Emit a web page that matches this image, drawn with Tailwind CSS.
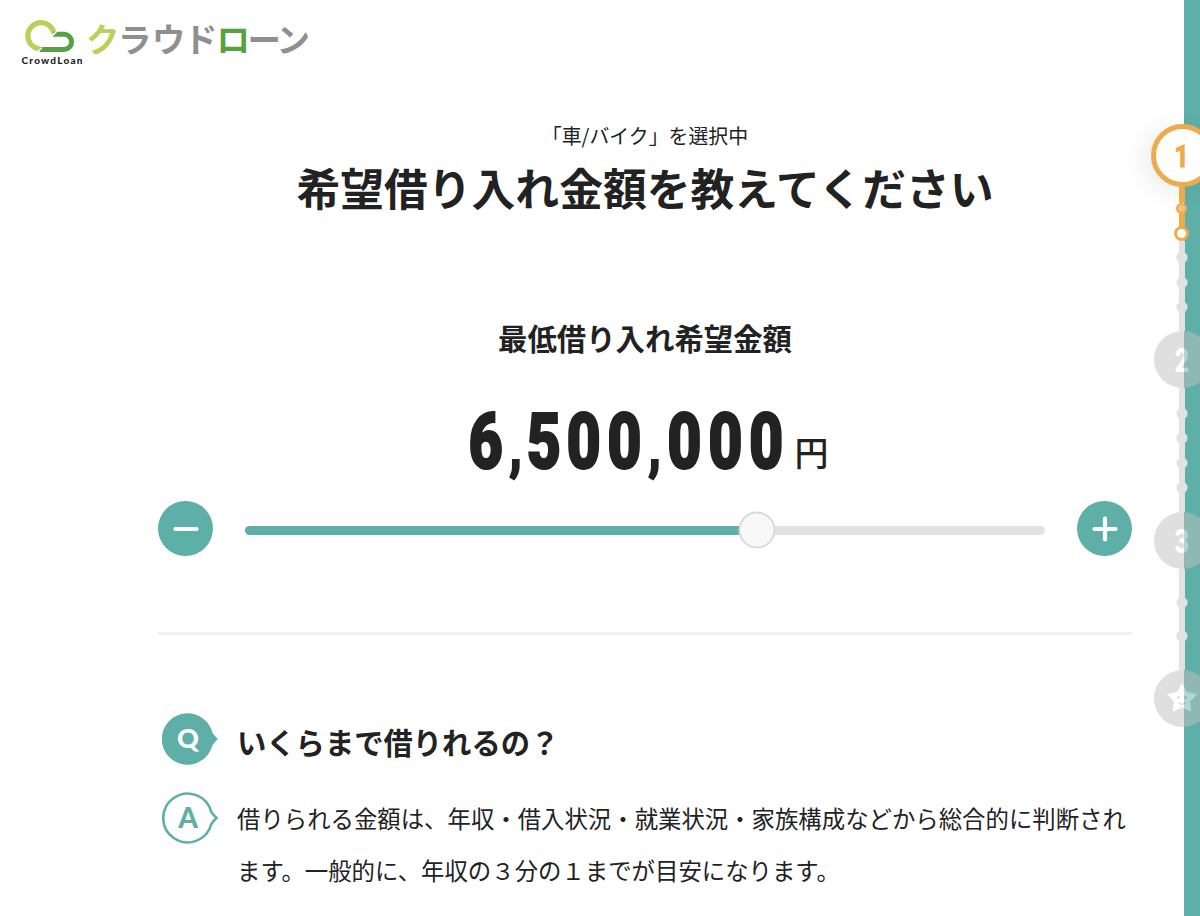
<!DOCTYPE html>
<html lang="ja">
<head>
    <meta charset="UTF-8">
    <meta name="viewport" content="width=device-width, initial-scale=1.0">
    <title>クラウドローン</title>
    <script src="https://cdn.jsdelivr.net/npm/@tailwindcss/browser@4"></script>
</head>
<body class="relative h-[916px] overflow-hidden bg-white font-['Noto_Sans_CJK_JP',sans-serif] text-[#222222]">

    <div class="flex h-full">
        <div class="w-[1132px] shrink-0">
            <!-- ロゴ -->
            <header class="h-[90px]">
                <svg class="block" width="330" height="90" viewBox="0 0 330 90">
                    <path d="M39.3 48.9A13.2 13.2 0 1 1 54 33.4" fill="none" stroke="#bccf5b" stroke-width="5.2" />
                    <path d="M53 34.2H64A7.6 7.6 0 0 1 64 49.4H39.5" fill="none" stroke="#58a143" stroke-width="5" />
                    <path d="M50.5 37.5L57 31M36 53.5L42 47.5" stroke="#fff" stroke-width="1.6" />
                    <text x="21.5" y="64.3" textLength="61" font-family="Lato" font-weight="900" font-size="10" fill="#222">CrowdLoan</text>
                    <g font-size="33.5" font-weight="700" fill="#8f8f8f">
                        <text y="52" x="86 118 152 184 216.5 247.5 276.5"><tspan fill="#bccf5b">ク</tspan>ラウド<tspan fill="#58a143">ロ</tspan>ーン</text>
                    </g>
                </svg>
            </header>

            <main class="pl-[158px]">
                <div class="text-center">
                    <p class="pt-[30px] text-[19.9px] leading-[31px]">「車/バイク」を選択中</p>
                    <h1 class="h-[77px] text-[43.8px] font-bold leading-[72px]">希望借り入れ金額を教えてください</h1>
                    <h2 class="mt-[90px] h-[42px] text-[29.4px] font-bold leading-[38px]">最低借り入れ希望金額</h2>
                </div>

                <!-- 金額 -->
                <svg class="mt-[30px] block" width="974" height="100" viewBox="158 390 974 100" fill="#222">
                    <g transform="scale(0.76 1)" font-family="Roboto" font-weight="900" stroke="#222" stroke-width="2">
                        <text y="468.5" x="616.5 670 693 745.5 799 853 878 932 985.5" font-size="78">6<tspan font-size="62">,</tspan>500<tspan font-size="62">,</tspan>000</text>
                    </g>
                    <text x="794.5" y="465.5" font-size="34" font-weight="500">円</text>
                </svg>

                <!-- スライダー -->
                <div class="flex items-center gap-8 pt-[11px]">
                    <button class="flex size-[55px] items-center justify-center rounded-full bg-[#5eafa8]">
                        <svg width="26" height="26" viewBox="0 0 26 26" stroke="#fff" stroke-width="4.2" stroke-linecap="round"><path d="M2.5 13H23.5" /></svg>
                    </button>
                    <div class="relative mt-[3px] h-[9px] w-[800px] rounded-full bg-[#e2e2e2]">
                        <div class="h-full rounded-full bg-[#5eafa8]" style="width: 64%"></div>
                        <div class="absolute top-1/2 size-[37px] -translate-x-1/2 -translate-y-1/2 rounded-full border-[2.5px] border-[#dadada] bg-[#f8f8f8]" style="left: 64%"></div>
                    </div>
                    <button class="flex size-[55px] items-center justify-center rounded-full bg-[#5eafa8]">
                        <svg width="26" height="26" viewBox="0 0 26 26" stroke="#fff" stroke-width="4.2" stroke-linecap="round"><path d="M2.5 13H23.5M13 2.5V23.5" /></svg>
                    </button>
                </div>

                <hr class="mt-[76px] border-t-[3px] border-[#f1f1f1]">

                <!-- Q&A -->
                <dl>
                    <dt class="flex gap-[18px] pl-1 pt-[77px]">
                        <svg class="shrink-0" width="57" height="54" viewBox="0 0 57 54">
                            <path d="M50.5 21C53 24 54.5 25.7 56 27C54.5 28.3 53 30 50.5 33A25.7 25.7 0 1 1 50.5 21Z" fill="#5eafa8" />
                            <text x="26" y="36" text-anchor="middle" font-family="Lato" font-weight="900" font-size="27" fill="#fff">Q</text>
                        </svg>
                        <span class="mt-[5px] text-[29.3px] font-bold leading-[48px]">いくらまで借りれるの？</span>
                    </dt>
                    <dd class="flex gap-[18px] pl-1 pt-[25px]">
                        <svg class="shrink-0" width="57" height="54" viewBox="0 0 57 54">
                            <path d="M49.3 21C51.5 24 53 25.7 54.5 27C53 28.3 51.5 30 49.3 33A24.4 24.4 0 1 1 49.3 21Z" fill="#fff" stroke="#5eafa8" stroke-width="2.6" />
                            <text x="26" y="36.5" text-anchor="middle" font-family="Lato" font-weight="900" font-size="28" fill="#5eafa8">A</text>
                        </svg>
                        <p class="mt-px whitespace-nowrap text-[23.4px] leading-[52px]">借りられる金額は、年収・借入状況・就業状況・家族構成などから総合的に判断され<br>ます。一般的に、年収の３分の１までが目安になります。</p>
                    </dd>
                </dl>
            </main>
        </div>

        <!-- ステップ表示 -->
        <aside class="relative ml-[52px] w-4 shrink-0 bg-[#5eafa8]">
            <div class="absolute -left-[34px] top-[124px] flex w-16 flex-col items-center font-['Roboto',sans-serif] font-bold">
                <div class="flex size-[63px] items-center justify-center rounded-full border-[5.5px] border-[#edab4b] bg-white shadow-[-8px_4px_26px_rgba(0,0,0,0.08)]">
                    <svg width="20" height="30" viewBox="0 0 20 30"><text transform="translate(9.5 26) scale(0.8 1)" text-anchor="middle" font-size="32" fill="#edab4b" stroke="#edab4b">1</text></svg>
                </div>
                <div class="-ml-px flex h-[54px] w-4 flex-col items-center">
                    <span class="h-[16px] w-[6px] bg-[#edab4b]"></span>
                    <span class="size-[11px] shrink-0 rounded-full border-[2.5px] border-[#edab4b] bg-[#f3c17a]"></span>
                    <span class="h-[13px] w-[6px] bg-[#edab4b]"></span>
                    <span class="-mt-px size-[15px] shrink-0 rounded-full border-[3px] border-[#edab4b] bg-white"></span>
                </div>
                <svg class="-ml-px block" width="12" height="90" viewBox="0 241 12 90" fill="#e2e2e2">
                    <path d="M3 241H9V331H3Z" />
                    <circle cx="6" cy="257.5" r="5.6" /><circle cx="6" cy="282.5" r="5.6" /><circle cx="6" cy="307" r="5.6" />
                </svg>
                <div class="flex size-[57px] items-center justify-center rounded-full bg-[#c1c1c1] opacity-50">
                    <svg width="20" height="30" viewBox="0 0 20 30"><text transform="translate(10 27) scale(0.75 1)" text-anchor="middle" font-size="33" font-weight="900" fill="#fff">2</text></svg>
                </div>
                <svg class="-ml-px block" width="12" height="124" viewBox="0 388 12 124" fill="#e2e2e2">
                    <path d="M3 388H9V512H3Z" />
                    <circle cx="6" cy="413.5" r="5.6" /><circle cx="6" cy="438" r="5.6" /><circle cx="6" cy="463" r="5.6" /><circle cx="6" cy="487.5" r="5.6" />
                </svg>
                <div class="flex size-[57px] items-center justify-center rounded-full bg-[#c1c1c1] opacity-50">
                    <svg width="20" height="30" viewBox="0 0 20 30"><text transform="translate(10 27) scale(0.75 1)" text-anchor="middle" font-size="33" font-weight="900" fill="#fff">3</text></svg>
                </div>
                <svg class="-ml-px block" width="12" height="101" viewBox="0 569 12 101" fill="#e2e2e2">
                    <path d="M3 569H9V670H3Z" />
                    <circle cx="6" cy="602.5" r="5.6" /><circle cx="6" cy="636" r="5.6" />
                </svg>
                <div class="flex size-[57px] items-center justify-center rounded-full bg-[#c1c1c1] opacity-50">
                    <svg width="32" height="32" viewBox="0 0 32 32">
                        <path d="M16 1L20.7 9.5L30.3 11.4L23.6 18.5L24.8 28.1L16 24L7.2 28.1L8.4 18.5L1.7 11.4L11.3 9.5Z" fill="#fff" stroke="#fff" stroke-linejoin="round" />
                        <circle cx="12.4" cy="14.5" r="1.4" fill="#c1c1c1" /><circle cx="19.6" cy="14.5" r="1.4" fill="#c1c1c1" />
                        <path d="M12.3 19.5Q16 23 19.7 19.5" fill="none" stroke="#c1c1c1" stroke-width="1.6" />
                    </svg>
                </div>
            </div>
        </aside>
    </div>

</body>
</html>
